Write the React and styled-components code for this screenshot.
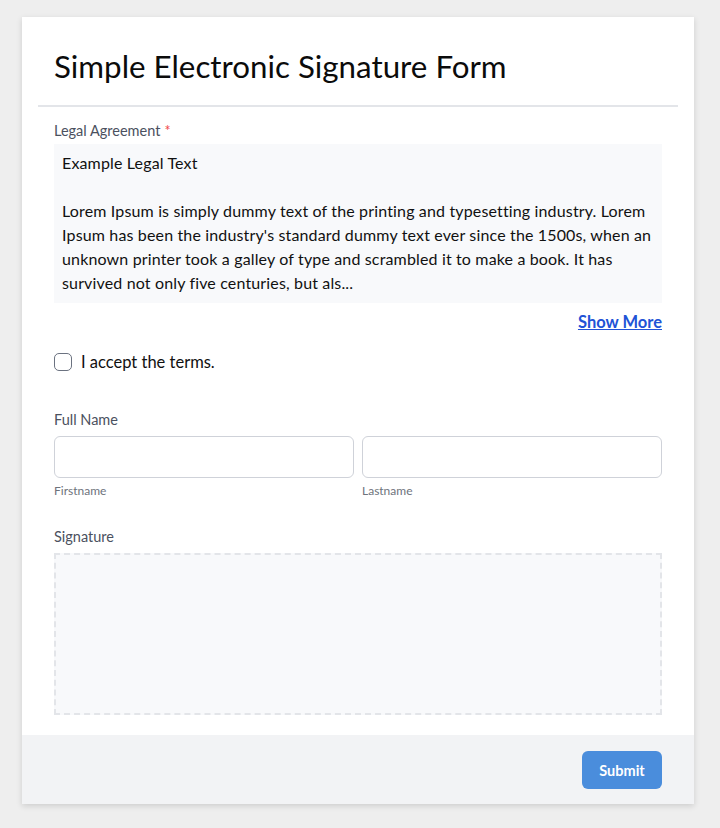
import React, { useState } from 'react';
import styled, { createGlobalStyle } from 'styled-components';

const GlobalStyle = createGlobalStyle`
  html, body {
    margin: 0;
    padding: 0;
    background: #eeeeee;
    font-family: Lato, "Noto Sans", "Liberation Sans", sans-serif;
    color: #0a0a0a;
  }
`

const Page = styled.div`
  padding: 17px 0 24px 22px;
`
const Card = styled.form`
  width: 672px;
  background: #fff;
  box-shadow: 0 2px 6px rgba(0, 0, 0, 0.14);
`
const Header = styled.div`
  margin: 0 16px;
  padding: 30px 16px 20px;
  border-bottom: 2px solid #e3e5e9;
`
const Title = styled.h1`
  margin: 0;
  font-size: 31.3px;
  font-weight: 400;
  line-height: 38px;
  color: #0b0b0b;
`
const Body = styled.div`
  padding: 15px 32px 20px;
`
const Field = styled.div`
  margin-bottom: ${p => p.spacing || 0}px;
`
const Label = styled.div`
  font-size: 14.5px;
  line-height: 18px;
  color: #4b5160;
  margin-bottom: ${p => (p.tight ? 4 : 7)}px;
`
const Star = styled.span`
  color: #f0494b;
  margin-left: 4px;
`
const LegalBox = styled.div`
  background: #f8f9fb;
  padding: 7px 4px 4px 8px;
  height: 148px;
  overflow: hidden;
  font-size: 16px;
  letter-spacing: 0.15px;
  line-height: 24px;
  color: #111;
  p {
    margin: 0 0 24px;
  }
`
const MoreRow = styled.div`
  display: flex;
  justify-content: flex-end;
  padding-top: 9px;
`
const MoreLink = styled.a`
  font-size: 16.5px;
  font-weight: 700;
  color: #2153d6;
  text-decoration: underline;
  cursor: pointer;
`
const CheckRow = styled.label`
  display: flex;
  align-items: center;
  gap: 9px;
  margin-top: 20px;
  font-size: 16.5px;
  color: #111;
`
const Box = styled.span`
  width: 16px;
  height: 16px;
  border: 1.5px solid #6b7280;
  border-radius: 5px;
  background: ${p => (p.checked ? '#4a8ddc' : '#fff')};
`
const NameGrid = styled.div`
  display: grid;
  grid-template-columns: 1fr 1fr;
  gap: 8px;
`
const Input = styled.input`
  box-sizing: border-box;
  width: 100%;
  height: 42px;
  border: 1px solid #cfd2d9;
  border-radius: 6px;
  background: #fff;
  font: inherit;
  padding: 0 10px;
`
const SubLabel = styled.div`
  font-size: 12px;
  line-height: 14px;
  color: #6e737c;
  margin-top: 6px;
`
const SignPad = styled.div`
  height: 158px;
  border: 2px dashed #e3e5e9;
  background: #f8f9fb;
`
const Footer = styled.div`
  display: flex;
  justify-content: flex-end;
  background: #f2f3f5;
  padding: 16px 32px 15px;
`
const Submit = styled.button`
  width: 80px;
  height: 38px;
  border: none;
  border-radius: 6px;
  background: #4a8ddc;
  color: #fff;
  font-family: inherit;
  font-size: 14.5px;
  font-weight: 700;
`

export default function App() {
  const [accepted, setAccepted] = useState(false);

  return (
    <Page>
      <GlobalStyle />
      <Card onSubmit={e => e.preventDefault()}>
        <Header>
          <Title>Simple Electronic Signature Form</Title>
        </Header>
        <Body>
          <Field>
            <Label tight>Legal Agreement<Star>*</Star></Label>
            <LegalBox>
              <p>Example Legal Text</p>
              <p>
                Lorem Ipsum is simply dummy text of the printing and typesetting industry. Lorem
                Ipsum has been the industry's standard dummy text ever since the 1500s, when an
                unknown printer took a galley of type and scrambled it to make a book. It has
                survived not only five centuries, but als...
              </p>
            </LegalBox>
            <MoreRow>
              <MoreLink>Show More</MoreLink>
            </MoreRow>
          </Field>
          <Field spacing={39}>
            <CheckRow onClick={() => setAccepted(!accepted)}>
              <Box checked={accepted} />
              I accept the terms.
            </CheckRow>
          </Field>
          <Field spacing={30}>
            <Label>Full Name</Label>
            <NameGrid>
              <div>
                <Input />
                <SubLabel>Firstname</SubLabel>
              </div>
              <div>
                <Input />
                <SubLabel>Lastname</SubLabel>
              </div>
            </NameGrid>
          </Field>
          <Field>
            <Label>Signature</Label>
            <SignPad />
          </Field>
        </Body>
        <Footer>
          <Submit type="submit">Submit</Submit>
        </Footer>
      </Card>
    </Page>
  );
}
